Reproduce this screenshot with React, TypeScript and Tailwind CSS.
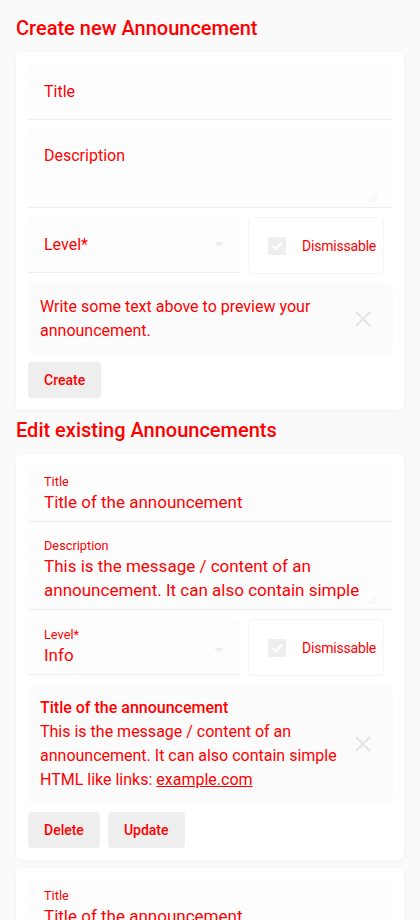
import React from "react";

const RED = "text-[#ff0000]";

function Arrow() {
  return (
    <svg width="10" height="5" viewBox="0 0 10 5" className="shrink-0">
      <path d="M0 0 L10 0 L5 5 Z" fill="#eeeeee" />
    </svg>
  );
}

function CloseIcon() {
  return (
    <svg width="24" height="24" viewBox="0 0 24 24" className="shrink-0">
      <path d="M5 5 L19 19 M19 5 L5 19" stroke="#e4e4e4" strokeWidth="2" fill="none" />
    </svg>
  );
}

function Resize() {
  return (
    <svg width="10" height="10" viewBox="0 0 10 10" className="absolute right-[14px] bottom-[4px]">
      <path d="M1 9 L9 1 M5 9 L9 5" stroke="#dddddd" strokeWidth="1" strokeDasharray="1 1" fill="none" />
    </svg>
  );
}

function Dismissable() {
  return (
    <div className="w-[136px] h-[57px] rounded-[4px] border border-[#f5f5f5] flex items-center pl-[19px]">
      <div className="w-[18px] h-[18px] rounded-[2px] bg-[#eeeeee] flex items-center justify-center">
        <svg width="14" height="14" viewBox="0 0 14 14">
          <path d="M2.5 7.2 L5.6 10.2 L11.6 3.8" stroke="#ffffff" strokeWidth="2" fill="none" />
        </svg>
      </div>
      <span className={`ml-[16px] text-[14px] leading-5 tracking-[-0.2px] ${RED}`}>Dismissable</span>
    </div>
  );
}

function Card({ children }: { children: React.ReactNode }) {
  return (
    <div className="bg-white rounded-[6px] shadow-[0_1px_4px_rgba(0,0,0,0.035)] p-3 flex flex-col">
      {children}
    </div>
  );
}

function Heading({ children, className = "" }: { children: React.ReactNode; className?: string }) {
  return (
    <h2 className={`text-[20px] leading-8 font-medium mb-2 ${RED} ${className}`}>{children}</h2>
  );
}

function CreateCard() {
  return (
    <Card>
      <div className="h-14 bg-[#fdfdfd] rounded-t-[4px] border-b border-[#eeeeee] px-4 pt-4">
        <span className={`text-[16px] leading-6 ${RED}`}>Title</span>
      </div>
      <div className="relative mt-2 h-20 bg-[#fdfdfd] rounded-t-[4px] border-b border-[#eeeeee] px-4 pt-4">
        <span className={`text-[16px] leading-6 ${RED}`}>Description</span>
        <Resize />
      </div>
      <div className="mt-[9px] flex items-start gap-2">
        <div className="w-[212px] h-14 bg-[#fdfdfd] rounded-t-[4px] border-b border-[#eeeeee] px-4 flex items-center justify-between">
          <span className={`text-[16px] leading-6 ${RED}`}>Level*</span>
          <Arrow />
        </div>
        <Dismissable />
      </div>
      <div className="mt-2 w-[365px] bg-[#fbfbfb] rounded-[8px] pl-3 pr-[18px] py-[13px] flex items-center">
        <p className={`flex-1 text-[16px] leading-6 ${RED}`}>
          Write some text above to preview your
          <br />
          announcement.
        </p>
        <CloseIcon />
      </div>
      <div className="mt-[6px] flex">
        <button className={`h-9 px-4 rounded-[4px] bg-[#eeeeee] text-[14px] font-medium ${RED}`}>Create</button>
      </div>
    </Card>
  );
}

function EditCard({ cut = false }: { cut?: boolean }) {
  return (
    <Card>
      <div className="h-14 bg-[#fdfdfd] rounded-t-[4px] border-b border-[#eeeeee] px-4 pt-2 flex flex-col">
        <span className={`text-[12.75px] leading-4 ${RED}`}>Title</span>
        <span className={`text-[17px] leading-6 ${RED}`}>Title of the announcement</span>
      </div>
      {!cut && (
        <>
          <div className="relative mt-2 h-20 bg-[#fdfdfd] rounded-t-[4px] border-b border-[#eeeeee] px-4 pt-2 flex flex-col">
            <span className={`text-[12.75px] leading-4 ${RED}`}>Description</span>
            <div className={`h-12 overflow-hidden text-[17px] leading-6 ${RED}`}>
              This is the message / content of an announcement. It can also contain simple HTML like links: example.com
            </div>
            <Resize />
          </div>
          <div className="mt-[9px] flex items-start gap-2">
            <div className="w-[212px] h-14 bg-[#fdfdfd] rounded-t-[4px] border-b border-[#eeeeee] pl-4 pr-4 pt-2 flex items-center justify-between">
              <div className="flex flex-col self-start">
                <span className={`text-[12.75px] leading-4 ${RED}`}>Level*</span>
                <span className={`text-[17px] leading-6 ${RED}`}>Info</span>
              </div>
              <Arrow />
            </div>
            <Dismissable />
          </div>
          <div className="mt-2 w-[365px] bg-[#fbfbfb] rounded-[8px] pl-3 pr-[18px] pt-3 pb-[13px] flex items-center">
            <div className="flex-1 flex flex-col">
              <p className={`text-[16px] leading-6 font-medium ${RED}`}>Title of the announcement</p>
              <p className={`text-[16px] leading-6 ${RED}`}>
                This is the message / content of an
                <br />
                announcement. It can also contain simple
                <br />
                HTML like links: <span className="underline">example.com</span>
              </p>
            </div>
            <CloseIcon />
          </div>
          <div className="mt-[7px] flex gap-2">
            <button className={`h-9 px-4 rounded-[4px] bg-[#eeeeee] text-[14px] font-medium ${RED}`}>Delete</button>
            <button className={`h-9 px-4 rounded-[4px] bg-[#eeeeee] text-[14px] font-medium ${RED}`}>Update</button>
          </div>
        </>
      )}
    </Card>
  );
}

export default function App() {
  return (
    <div className="min-h-screen bg-[#fafafa] px-4 pt-3 pb-8" style={{ fontFamily: "Roboto, 'Noto Sans', sans-serif" }}>
      <Heading>Create new Announcement</Heading>
      <CreateCard />
      <Heading className="mt-1">Edit existing Announcements</Heading>
      <div className="flex flex-col gap-2">
        <EditCard />
        <EditCard />
      </div>
    </div>
  );
}
